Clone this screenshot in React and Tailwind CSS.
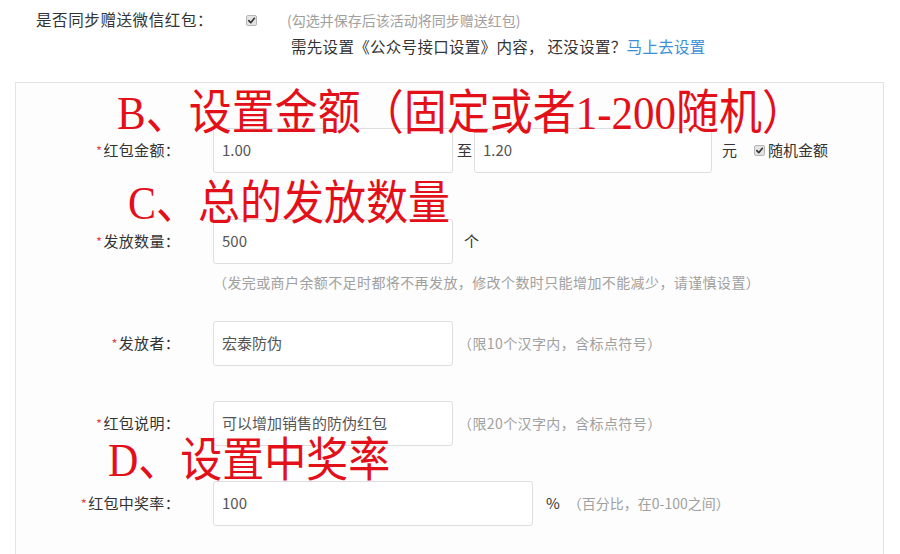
import React from "react";

const CJK = { fontFamily: '"Noto Sans CJK SC", "Noto Sans", sans-serif' };
const ANNO = { fontFamily: '"Liberation Serif", "Noto Sans CJK SC", serif' };

function Check() {
  return (
    <span className="inline-flex items-center justify-center w-[11px] h-[11px] rounded-[2px] border border-[#b5b5b5] bg-[#e4e4e4] shrink-0">
      <svg width="9" height="9" viewBox="0 0 10 10">
        <path d="M2 5.2 L4.2 7.4 L8.2 2.6" fill="none" stroke="#333" strokeWidth="1.8" strokeLinecap="round" strokeLinejoin="round" />
      </svg>
    </span>
  );
}

function Label({ children }) {
  return (
    <div className="w-[164px] shrink-0 text-right text-[15px] text-[#333] leading-[20px] tracking-[0.3px]">
      <span className="text-[#e5474b] text-[13px] mr-[1px]">*</span>
      {children}：
    </div>
  );
}

function Box({ value, w = "w-[240px]" }) {
  return (
    <div className={`${w} h-[45px] ml-[33px] shrink-0 flex items-center pl-[8px] border border-[#dedede] rounded-[3px] bg-white text-[15px] text-[#555]`}>
      {value}
    </div>
  );
}

export default function App() {
  return (
    <div className="w-[900px] h-[554px] overflow-hidden bg-white relative" style={CJK}>
      <div className="pt-[9px]">
        <div className="flex items-center h-[22px]">
          <div className="w-[210px] ml-[36px] text-[15.5px] text-[#333] tracking-[0.6px]">是否同步赠送微信红包：</div>
          <Check />
          <div className="ml-[30px] text-[14px] text-[#a0a0a0]">(勾选并保存后该活动将同步赠送红包)</div>
        </div>
        <div className="mt-[5px] h-[22px] flex items-center pl-[291px] text-[15.5px] text-[#333] whitespace-nowrap tracking-[0.3px]">
          需先设置《公众号接口设置》内容， 还没设置？<span className="text-[#3b8fd6]">马上去设置</span>
        </div>
      </div>

      <div className="relative mt-[24px] ml-[15px] w-[869px] h-[500px] border border-[#e3e3e3] bg-[#fdfdfd] pt-[45px]">
        <div className="flex items-center h-[45px]">
          <Label>红包金额</Label>
          <Box value="1.00" />
          <span className="ml-[4px] text-[15px] text-[#333]">至</span>
          <div className="w-[238px] h-[45px] ml-[2px] flex items-center pl-[8px] border border-[#dedede] rounded-[3px] bg-white text-[15px] text-[#555]">1.20</div>
          <span className="ml-[10px] text-[15px] text-[#333]">元</span>
          <span className="ml-[17px] flex items-center">
            <Check />
            <span className="ml-[3px] text-[15px] text-[#333]">随机金额</span>
          </span>
        </div>

        <div className="flex items-center h-[44px] mt-[46px]">
          <Label>发放数量</Label>
          <Box value="500" />
          <span className="ml-[11px] text-[15px] text-[#333]">个</span>
        </div>
        <div className="mt-[9px] h-[20px] ml-[197px] text-[14px] text-[#a0a0a0] leading-[20px] whitespace-nowrap tracking-[0.4px]">
          （发完或商户余额不足时都将不再发放，修改个数时只能增加不能减少，请谨慎设置）
        </div>

        <div className="flex items-center h-[45px] mt-[29px]">
          <Label>发放者</Label>
          <Box value="宏泰防伪" />
          <span className="ml-[5px] text-[14px] text-[#a0a0a0] tracking-[0.4px]">（限10个汉字内，含标点符号）</span>
        </div>

        <div className="flex items-center h-[45px] mt-[35px]">
          <Label>红包说明</Label>
          <Box value="可以增加销售的防伪红包" />
          <span className="ml-[5px] text-[14px] text-[#a0a0a0] tracking-[0.4px]">（限20个汉字内，含标点符号）</span>
        </div>

        <div className="flex items-center h-[45px] mt-[35px]">
          <Label>红包中奖率</Label>
          <Box value="100" w="w-[320px]" />
          <span className="ml-[13px] text-[15px] text-[#333]">%</span>
          <span className="ml-[8px] text-[14px] text-[#a0a0a0]">（百分比，在0-100之间）</span>
        </div>

        <div className="absolute left-[101px] top-[10px] text-[43px] leading-[42px] text-[#e3101a] whitespace-nowrap scale-y-[1.1]" style={ANNO}>
          B、设置金额（固定或者1-200随机）
        </div>
        <div className="absolute left-[112px] top-[100px] text-[42px] leading-[42px] text-[#e3101a] whitespace-nowrap scale-y-[1.1]" style={ANNO}>
          C、总的发放数量
        </div>
        <div className="absolute left-[92px] top-[357px] text-[42px] leading-[42px] text-[#e3101a] whitespace-nowrap scale-y-[1.1]" style={ANNO}>
          D、设置中奖率
        </div>
      </div>
    </div>
  );
}
